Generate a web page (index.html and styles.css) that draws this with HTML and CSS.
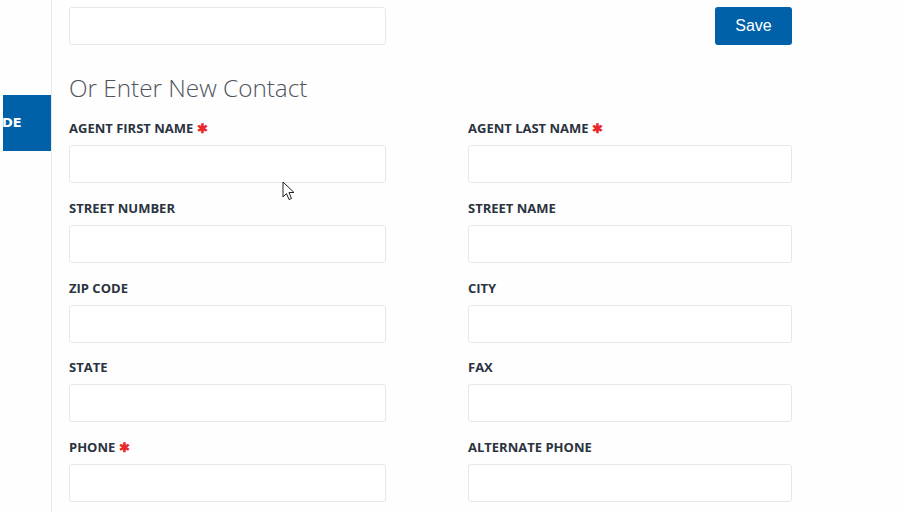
FILE: index.html
```html
<!DOCTYPE html>
<html lang="en">
  <head>
    <meta charset="UTF-8" />
    <meta name="viewport" content="width=device-width, initial-scale=1.0" />
    <title>New Contact</title>
    <link rel="stylesheet" href="styles.css">
  </head>
  <body>
    <div class="page">
      <aside class="sidebar">
        <div class="side-tab">DE</div>
      </aside>

      <main class="content">
        <div class="top-row">
          <input type="text" class="field-input" />
          <div class="save-cell">
            <button class="save-button" type="button">Save</button>
          </div>
        </div>

        <h2 class="section-title">Or Enter New Contact</h2>

        <form class="contact-form">
          <div class="field">
            <label>Agent First Name <span class="req">&#10033;</span></label>
            <input type="text" class="field-input" />
          </div>
          <div class="field">
            <label>Agent Last Name <span class="req">&#10033;</span></label>
            <input type="text" class="field-input" />
          </div>
          <div class="field">
            <label>Street Number</label>
            <input type="text" class="field-input" />
          </div>
          <div class="field">
            <label>Street Name</label>
            <input type="text" class="field-input" />
          </div>
          <div class="field">
            <label>Zip Code</label>
            <input type="text" class="field-input" />
          </div>
          <div class="field">
            <label>City</label>
            <input type="text" class="field-input" />
          </div>
          <div class="field">
            <label>State</label>
            <input type="text" class="field-input" />
          </div>
          <div class="field">
            <label>Fax</label>
            <input type="text" class="field-input" />
          </div>
          <div class="field">
            <label>Phone <span class="req">&#10033;</span></label>
            <input type="text" class="field-input" />
          </div>
          <div class="field">
            <label>Alternate Phone</label>
            <input type="text" class="field-input" />
          </div>
        </form>
      </main>
    </div>

    <!-- mouse pointer caught in the screenshot -->
    <svg class="pointer" width="14" height="22" viewBox="0 0 14 22">
      <path d="M1 1 L1 16 L4.5 12.5 L7 18.5 L9.5 17.5 L7 11.5 L12 11.5 Z"
        fill="#fff" stroke="#222" stroke-width="1" stroke-linejoin="round" />
    </svg>
  </body>
</html>
```

FILE: styles.css
```css
:root {
  --blue: #0060a8;
  --ink: #2b3340;
  --line: #e4e7eb;
  --red: #e8282b;
}

body {
  margin: 0;
  background: #fefefe;
  font-family: "Open Sans", Arial, sans-serif;
  height: 512px;
  overflow: hidden;
}

.page {
  display: flex;
  height: 100%;
}

.sidebar {
  width: 51px;
  border-right: 1px solid var(--line);
  padding-top: 95px;
  flex-shrink: 0;
}

.side-tab {
  margin-left: 3px;
  height: 56px;
  background: var(--blue);
  color: #fff;
  font-family: "DejaVu Sans", sans-serif;
  font-weight: bold;
  font-size: 13px;
  line-height: 56px;
  overflow: hidden;
  text-indent: -1px;
}

.content {
  padding: 7px 0 0 17px;
}

.top-row,
.contact-form {
  display: grid;
  grid-template-columns: 317px 324px;
  column-gap: 82px;
}

.save-cell {
  display: flex;
  justify-content: flex-end;
}

.save-button {
  width: 77px;
  height: 38px;
  background: var(--blue);
  color: #fff;
  border: none;
  border-radius: 3px;
  font-family: "Liberation Sans", Arial, sans-serif;
  font-size: 16px;
  cursor: pointer;
}

.section-title {
  margin: 27px 0 15px;
  font-family: "Open Sans", sans-serif;
  font-weight: 300;
  font-size: 24.3px;
  line-height: 32px;
  color: #50555c;
}

.field {
  display: flex;
  flex-direction: column;
  margin-bottom: 15.75px;
}

.field label {
  font-size: 13px;
  line-height: 16px;
  font-weight: 700;
  text-transform: uppercase;
  color: var(--ink);
  padding-top: 1px;
  margin-bottom: 9px;
}

.req {
  color: var(--red);
  font-size: 13px;
}

.field-input {
  display: block;
  box-sizing: border-box;
  width: 100%;
  height: 38px;
  margin: 0;
  border: 1px solid var(--line);
  border-radius: 3px;
  background: #fff;
}

.pointer {
  position: absolute;
  left: 282px;
  top: 181px;
}
```
